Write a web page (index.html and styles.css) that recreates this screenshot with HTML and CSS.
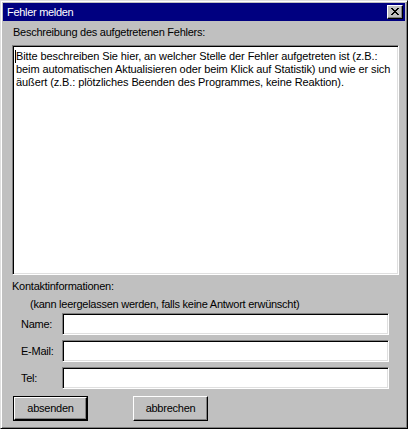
FILE: index.html
```html
<!DOCTYPE html>
<html lang="de">
<head>
<meta charset="utf-8">
<title>Fehler melden</title>
<link rel="stylesheet" href="styles.css">
</head>
<body>
<div class="window">
  <div class="titlebar">
    <span class="title">Fehler melden</span>
    <span class="close">
      <svg width="8" height="7" viewBox="0 0 8 7" shape-rendering="crispEdges">
        <path fill="#000" d="M0 0h2v1H0zM6 0h2v1H6zM1 1h2v1H1zM5 1h2v1H5zM2 2h4v1H2zM3 3h2v1H3zM2 4h4v1H2zM1 5h2v1H1zM5 5h2v1H5zM0 6h2v1H0zM6 6h2v1H6z"/>
      </svg>
    </span>
  </div>
  <div class="content">
    <div class="label-top">Beschreibung des aufgetretenen Fehlers:</div>
    <div class="textarea"><span class="caret"></span>Bitte beschreiben Sie hier, an welcher Stelle der Fehler aufgetreten ist (z.B.:<br>beim automatischen Aktualisieren oder beim Klick auf Statistik) und wie er sich<br>äußert (z.B.: plötzliches Beenden des Programmes, keine Reaktion).</div>
    <div class="label-contact">Kontaktinformationen:</div>
    <div class="label-hint">(kann leergelassen werden, falls keine Antwort erwünscht)</div>
    <div class="fields">
      <span class="field-label">Name:</span><span class="input"></span>
      <span class="field-label">E-Mail:</span><span class="input"></span>
      <span class="field-label">Tel:</span><span class="input"></span>
    </div>
    <div class="buttons">
      <span class="button default"><span class="button-inner">absenden</span></span>
      <span class="button"><span class="button-inner">abbrechen</span></span>
    </div>
  </div>
</div>
</body>
</html>
```

FILE: styles.css
```css
html, body {
  margin: 0;
  padding: 0;
  background: #c0c0c0;
}

.window {
  width: 408px;
  height: 429px;
  box-sizing: border-box;
  background: #c0c0c0;
  border: 1px solid;
  border-color: #dfdfdf #000 #000 #dfdfdf;
  box-shadow: inset 1px 1px #fff, inset -1px -1px #808080;
  padding: 2px;
  font-family: "Liberation Sans", Arial, sans-serif;
  font-size: 11px;
  line-height: 13px;
  letter-spacing: -0.25px;
  color: #000;
}

.titlebar {
  height: 18px;
  background: #000080;
  color: #fff;
  display: flex;
  align-items: center;
  justify-content: space-between;
  padding: 0 2px 0 4px;
}

.title {
  font-size: 11px;
  line-height: 18px;
  letter-spacing: -0.3px;
}

.close {
  width: 16px;
  height: 14px;
  box-sizing: border-box;
  background: #c0c0c0;
  border: 1px solid;
  border-color: #fff #000 #000 #fff;
  box-shadow: inset -1px -1px #808080;
  display: flex;
  align-items: center;
  justify-content: center;
  padding: 0 1px 1px 0;
}

.close svg {
  display: block;
}

.content {
  padding: 0 6px 0 9px;
}

.label-top {
  margin-top: 5px;
  padding-left: 1px;
}

.textarea {
  margin-top: 6px;
  height: 230px;
  box-sizing: border-box;
  background: #fff;
  border: 1px solid;
  border-color: #808080 #fff #fff #808080;
  box-shadow: inset 1px 1px #000, inset -1px -1px #dfdfdf;
  padding: 4px 2px 0 3px;
  white-space: nowrap;
  letter-spacing: -0.1px;
  position: relative;
}

.caret {
  position: absolute;
  left: 2px;
  top: 4px;
  width: 1px;
  height: 13px;
  background: #000;
}

.label-contact {
  margin-top: 5px;
}

.label-hint {
  margin-top: 5px;
  padding-left: 18px;
}

.fields {
  margin-top: 2px;
  display: grid;
  grid-template-columns: 50px 327px;
  grid-auto-rows: 22px;
  row-gap: 5px;
  align-items: center;
}

.field-label {
  padding-left: 9px;
}

.input {
  height: 22px;
  box-sizing: border-box;
  background: #fff;
  border: 1px solid;
  border-color: #808080 #fff #fff #808080;
  box-shadow: inset 1px 1px #000, inset -1px -1px #dfdfdf;
}

.buttons {
  margin-top: 7px;
  display: flex;
  gap: 45px;
  padding-left: 1px;
}

.button {
  width: 75px;
  height: 25px;
  box-sizing: border-box;
  border: 1px solid;
  border-color: #fff #000 #000 #fff;
  box-shadow: inset -1px -1px #808080;
  display: flex;
}

.button.default {
  border: 1px solid #000;
  box-shadow: none;
}

.button-inner {
  flex: 1;
  display: flex;
  align-items: center;
  justify-content: center;
  padding-bottom: 1px;
}

.button.default .button-inner {
  border: 1px solid;
  border-color: #fff #000 #000 #fff;
  box-shadow: inset -1px -1px #808080;
}
```
